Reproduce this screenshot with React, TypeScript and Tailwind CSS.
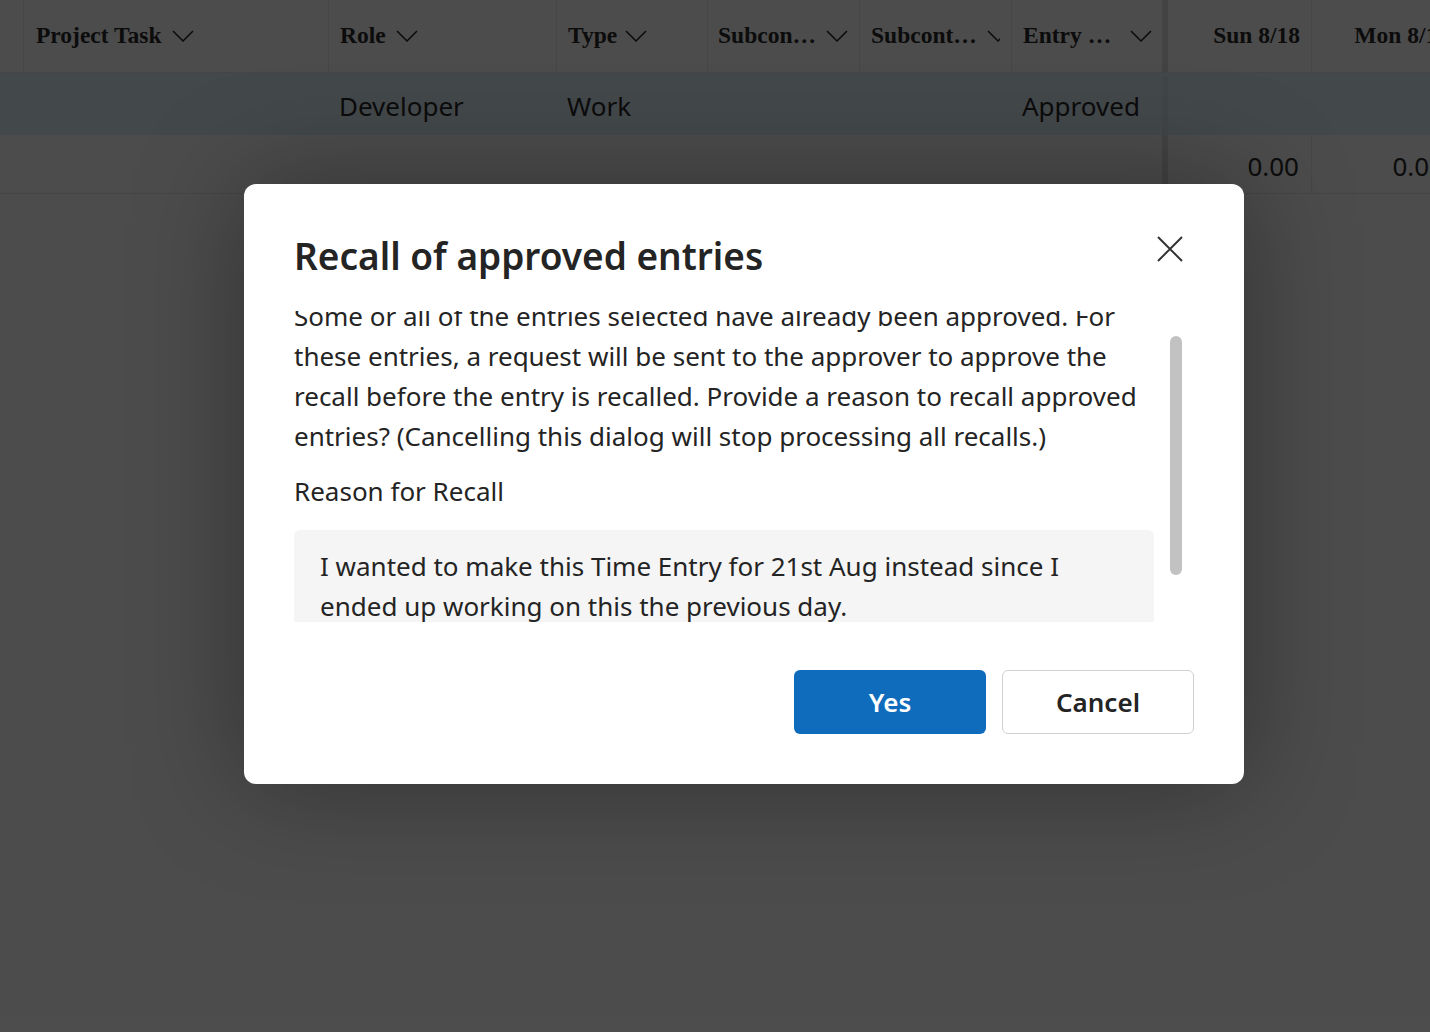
const Chevron = () => (
  <svg width="22" height="12" viewBox="0 0 22 12" fill="none" className="shrink-0">
    <path d="M1 1l10 10L21 1" stroke="#242424" strokeWidth="1.5" />
  </svg>
);

const headerFont = { fontFamily: '"Liberation Serif", serif' };

const HeaderCell = ({
  label,
  width,
  className = "",
  chevron = true,
}: {
  label: string;
  width: string;
  className?: string;
  chevron?: boolean;
}) => (
  <div className={`${width} h-full flex items-center border-r border-[#ededed] overflow-hidden ${className}`}>
    <span className="whitespace-nowrap">{label}</span>
    {chevron && <Chevron />}
  </div>
);

const Table = () => (
  <div className="w-[1600px] text-[#2a2a2a]" style={{ fontFamily: '"Noto Sans", sans-serif' }}>
    <div className="flex h-[73px] font-bold text-[23.5px] bg-white border-b border-[#e6e6e6]" style={headerFont}>
      <div className="w-[24px] h-full border-r border-[#ededed]" />
      <HeaderCell label="Project Task" width="w-[305px]" className="pl-[12px] gap-[10px]" />
      <HeaderCell label="Role" width="w-[228px]" className="pl-[11px] gap-[10px]" />
      <HeaderCell label="Type" width="w-[151px]" className="pl-[11px] gap-[8px]" />
      <HeaderCell label="Subcon…" width="w-[152px]" className="pl-[10px] gap-[10px]" />
      <div className="w-[152px] h-full flex items-center border-r border-[#ededed] pl-[11px]">
        <div className="w-[129px] flex items-center gap-[10px] overflow-hidden">
          <span className="whitespace-nowrap">Subcont…</span>
          <Chevron />
        </div>
      </div>
      <div className="w-[150px] h-full flex items-center justify-between pl-[11px] pr-[10px]">
        <span className="whitespace-nowrap">Entry …</span>
        <Chevron />
      </div>
      <div className="w-[6px] h-full bg-[#e0e0e0]" />
      <HeaderCell label="Sun 8/18" width="w-[144px]" className="justify-end pr-[11px]" chevron={false} />
      <HeaderCell label="Mon 8/19" width="w-[144px]" className="justify-end pr-[6px]" chevron={false} />
    </div>

    <div className="flex h-[62px] items-center pt-[4px] text-[26px] bg-[#e2f0fc]">
      <div className="w-[329px]" />
      <div className="w-[228px] pl-[10px]">Developer</div>
      <div className="w-[151px] pl-[10px]">Work</div>
      <div className="w-[304px]" />
      <div className="w-[150px] pl-[10px]">Approved</div>
      <div className="w-[6px] self-stretch bg-[#dde6ee]" />
    </div>

    <div className="flex h-[59px] text-[26px] bg-white border-b border-[#e6e6e6]">
      <div className="w-[1162px]" />
      <div className="w-[6px] bg-[#e0e0e0]" />
      <div className="w-[144px] flex items-center justify-end pt-[4px] pr-[12px] border-r border-[#ededed]">0.00</div>
      <div className="w-[144px] flex items-center justify-end pt-[4px] pr-[12px]">0.00</div>
    </div>
  </div>
);

const CloseIcon = () => (
  <svg width="26" height="26" viewBox="0 0 26 26" fill="none">
    <path d="M1 1l24 24M25 1L1 25" stroke="#333" strokeWidth="2" />
  </svg>
);

const Dialog = () => (
  <div
    className="w-[1000px] h-[600px] bg-white rounded-[12px] shadow-[0_0_110px_rgba(0,0,0,0.35)] pt-[48px] pl-[50px] pr-[50px] flex flex-col text-[#242424]"
    style={{ fontFamily: '"Noto Sans", sans-serif' }}
  >
    <div className="flex items-start justify-between">
      <h2 className="text-[37px] leading-[48px] font-semibold">Recall of approved entries</h2>
      <button className="mt-[4px] mr-[11px]">
        <CloseIcon />
      </button>
    </div>

    <div className="mt-[31px] h-[311px] flex">
      <div className="w-[860px] overflow-hidden">
        <div className="-mt-[15px] text-[26px] leading-[40px]">
          <p>
            Some or all of the entries selected have already been approved. For these entries, a request will be sent
            to the approver to approve the recall before the entry is recalled. Provide a reason to recall approved
            entries? (Cancelling this dialog will stop processing all recalls.)
          </p>
          <div className="mt-[15px]">Reason for Recall</div>
          <div className="mt-[19px] bg-[#f5f5f5] rounded-t-[6px] px-[26px] pt-[16px] pb-[20px]">
            I wanted to make this Time Entry for 21st Aug instead since I ended up working on this the previous day.
          </div>
        </div>
      </div>
      <div className="ml-auto mr-[12px] w-[12px]">
        <div className="mt-[25px] h-[239px] w-full rounded-full bg-[#c2c2c2]" />
      </div>
    </div>

    <div className="mt-[48px] flex justify-end gap-[16px] text-[26px] font-semibold">
      <button className="w-[192px] h-[64px] rounded-[6px] bg-[#0f6cbd] text-white">Yes</button>
      <button className="w-[192px] h-[64px] rounded-[6px] border-[1.5px] border-[#d1d1d1] bg-white text-[#242424]">
        Cancel
      </button>
    </div>
  </div>
);

export default function App() {
  return (
    <div className="relative w-[1430px] h-[1032px] overflow-hidden bg-white">
      <Table />
      <div className="absolute inset-0 bg-black/70">
        <div className="ml-[244px] mt-[184px]">
          <Dialog />
        </div>
      </div>
    </div>
  );
}
